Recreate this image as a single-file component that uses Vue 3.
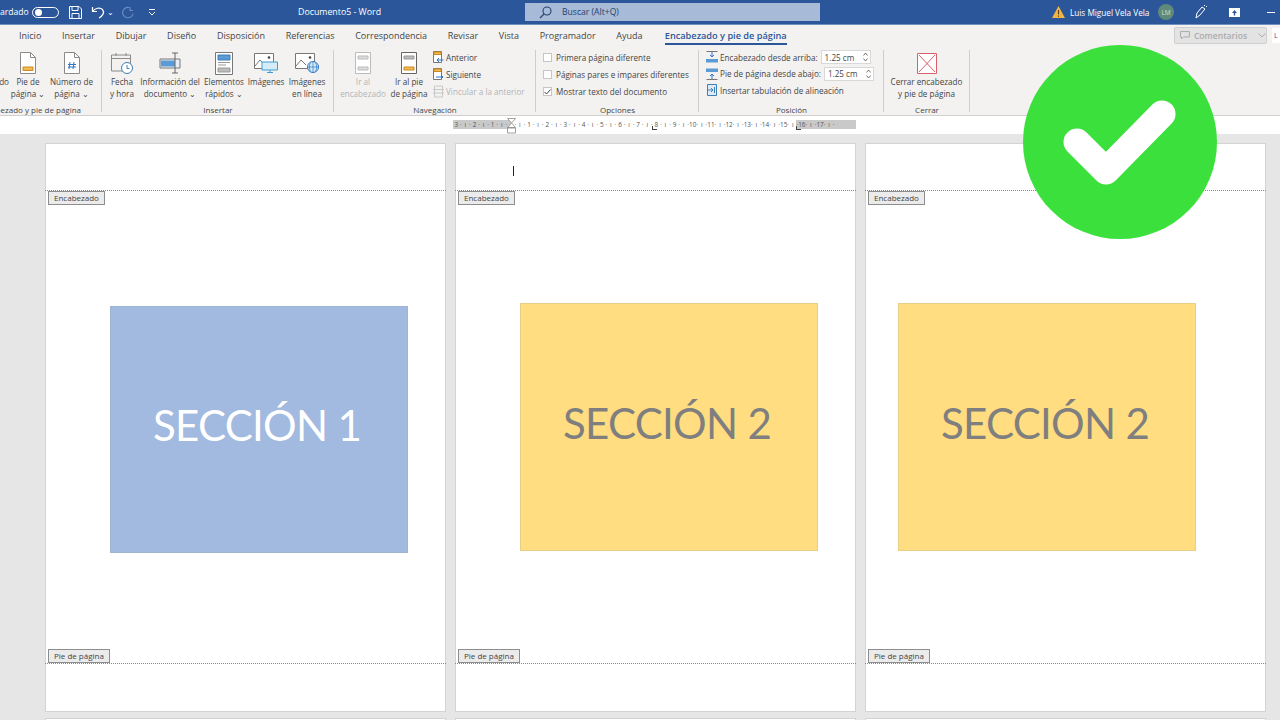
<script setup>
  // ruler ticks: four cells per centimetre, zero is the margin marker
  const ruler_cells = [];
  for (let i = -12; i <= 71; i++) {
    let label = "·";
    if (i % 4 == 0) label = i == 0 ? "" : String(Math.abs(i / 4));
    else if (Math.abs(i % 4) == 2) label = "ı";
    ruler_cells.push({ id: i, label: label });
  }

  const tabs = ["Inicio", "Insertar", "Dibujar", "Diseño", "Disposición", "Referencias", "Correspondencia", "Revisar", "Vista", "Programador", "Ayuda"];
  const options = [
    { text: "Primera página diferente", checked: false },
    { text: "Páginas pares e impares diferentes", checked: false },
    { text: "Mostrar texto del documento", checked: true }
  ];
</script>

<template>
  <div class="word">
    <!-- TITLE BAR -->
    <header class="title-bar">
      <span class="autosave">ardado</span>
      <span class="toggle"><i></i></span>
      <svg class="qat save" width="13" height="13" viewBox="0 0 13 13" fill="none" stroke="#fff"><path d="M.5.5h9.5l2.5 2.5v9.5H.5z M3 .5v4h6v-4 M3 12.5V7.5h7v5"/></svg>
      <svg class="qat undo" width="14" height="13" viewBox="0 0 14 13" fill="none" stroke="#fff" stroke-width="1.2"><path d="M1.5 1v4.5H6 M1.5 5.5C4 2 9 1 11.5 3.5 14 6.5 11.5 10 8 12"/></svg>
      <span class="qat caret">⌄</span>
      <svg class="qat redo" width="13" height="13" viewBox="0 0 13 13" fill="none" stroke="#6f8fc0" stroke-width="1.1"><path d="M7 1.5a5.2 5.2 0 1 0 4 6M8 1v3.5h3"/></svg>
      <svg class="qat more" width="8" height="8" viewBox="0 0 8 8" fill="none" stroke="#fff"><path d="M1 1.5h6M1 4l3 3 3-3"/></svg>
      <span class="doc-title">Documento5 - Word</span>
      <div class="search">
        <svg width="13" height="13" viewBox="0 0 13 13" fill="none" stroke="#24416f" stroke-width="1.1"><circle cx="8" cy="5" r="4"/><path d="M5 8l-4 4"/></svg>
        <span>Buscar (Alt+Q)</span>
      </div>
      <div class="account">
        <svg class="warn" width="13" height="12" viewBox="0 0 13 12"><path d="M6.5 0L13 12H0z" fill="#f2b544"/><path d="M6.5 4v4.5M6.5 9.5v1.3" stroke="#5a4310" stroke-width="1.1"/></svg>
        <span class="user">Luis Miguel Vela Vela</span>
        <span class="avatar">LM</span>
        <svg class="pen" width="12" height="14" viewBox="0 0 12 14" fill="none" stroke="#fff"><path d="M1 13l1-5 5-6 3 2-5 6z M9 1l1-1 M11 2l1-1"/></svg>
        <svg class="present" width="11" height="9" viewBox="0 0 11 9"><path d="M0 0h11v9H0z" fill="#fff"/><path d="M5.5 2L3 5h1.8v2.5h1.4V5H8z" fill="#2b579a"/></svg>
        <span class="minimize"></span>
      </div>
    </header>

    <!-- TABS -->
    <nav class="tabs">
      <span v-for="tab in tabs" :key="tab">{{ tab }}</span>
      <span class="tab-active">Encabezado y pie de página</span>
      <div class="tabs-right">
        <span class="comments">
          <svg width="10" height="9" viewBox="0 0 10 9" fill="none" stroke="#aaa"><path d="M.5.5h9v5.500h-6L1.5 8V6h-1z"/></svg>
          Comentarios
          <svg class="comments-caret" width="8" height="5" viewBox="0 0 8 5" fill="none" stroke="#aaa"><path d="M.5.5L4 4 7.5.5"/></svg>
        </span>
        <span class="share">L</span>
      </div>
    </nav>

    <!-- RIBBON -->
    <section class="ribbon">
      <div class="group group-hf">
        <div class="group-body">
          <div class="btn btn-cut"><div class="btn-icon"></div><span>do</span></div>
          <div class="btn btn-pie">
            <div class="btn-icon">
              <svg width="16" height="22" viewBox="0 0 16 22" fill="#fff" stroke="#8a8a8a"><path d="M.5.5h10l5 5v16H.5z"/><path d="M10.5.5v5h5" fill="none"/><path d="M3 15h10v3.5H3z" fill="#f5b955" stroke="#c98a1f"/></svg>
            </div>
            <span>Pie de</span><span>página ⌄</span>
          </div>
          <div class="btn btn-num">
            <div class="btn-icon">
              <svg width="16" height="22" viewBox="0 0 16 22" fill="#fff" stroke="#8a8a8a"><path d="M.5.5h10l5 5v16H.5z"/><path d="M10.5.5v5h5" fill="none"/><path d="M6 10l-1 7M10 10l-1 7M4 12.5h8M4 15h8" stroke="#2f76c5" fill="none"/></svg>
            </div>
            <span>Número de</span><span>página ⌄</span>
          </div>
        </div>
        <div class="group-label">Encabezado y pie de página</div>
      </div>

      <div class="group group-insert">
        <div class="group-body">
          <div class="btn btn-date">
            <div class="btn-icon">
              <svg width="22" height="22" viewBox="0 0 22 22" fill="none" stroke="#8a8a8a"><path d="M.5 3h19v16H.5zM.5 6.5h19M5 1v3M15 1v3"/><circle cx="16" cy="16" r="5.5" fill="#fff" stroke="#3f7fb5"/><path d="M16 13v3.5h2.5" stroke="#3f7fb5"/></svg>
            </div>
            <span>Fecha</span><span>y hora</span>
          </div>
          <div class="btn btn-info">
            <div class="btn-icon">
              <svg width="22" height="22" viewBox="0 0 22 22" fill="none"><path d="M1 7h20v9H1z" fill="#e9eef4" stroke="#777"/><path d="M2 8.5h14v6H2z" fill="#5b9bd5"/><path d="M13 1h6M13 21h6M16 1v20" stroke="#666"/></svg>
            </div>
            <span>Información del</span><span>documento ⌄</span>
          </div>
          <div class="btn btn-quick">
            <div class="btn-icon">
              <svg width="18" height="23" viewBox="0 0 18 23" fill="#fff" stroke="#777"><path d="M.5.5h17v22H.5z"/><path d="M3 3h12v5H3z" fill="#5b9bd5" stroke="#3f7fb5"/><path d="M3 10.5h12M3 13h8" stroke="#999" fill="none"/><path d="M3 16h12v4H3z" fill="#bbb" stroke="#999"/></svg>
            </div>
            <span>Elementos</span><span>rápidos ⌄</span>
          </div>
          <div class="btn btn-pic">
            <div class="btn-icon">
              <svg width="24" height="20" viewBox="0 0 24 20" fill="none" stroke="#777"><path d="M.5.5h19v15H.5z" fill="#fff"/><path d="M1 13l5-6 5 5" stroke="#777"/><circle cx="15" cy="4.5" r="1.3" fill="#444" stroke="none"/><path d="M8 9h15.5v8H8z" fill="#d6ecf8" stroke="#3f9bd1"/><path d="M16 17v2.5M13 19.5h6" stroke="#3f9bd1"/></svg>
            </div>
            <span>Imágenes</span>
          </div>
          <div class="btn btn-web">
            <div class="btn-icon">
              <svg width="24" height="20" viewBox="0 0 24 20" fill="none" stroke="#777"><path d="M.5.5h19v15H.5z" fill="#fff"/><path d="M1 13l5-6 5 5"/><circle cx="15" cy="4.5" r="1.3" fill="#444" stroke="none"/><circle cx="18" cy="14" r="5.5" fill="#d6ecf8" stroke="#2f76c5"/><path d="M12.5 14h11M18 8.5v11M15.5 9.5c-1.5 3-1.5 6 0 9M20.5 9.5c1.5 3 1.5 6 0 9" stroke="#2f76c5" stroke-width=".7"/></svg>
            </div>
            <span>Imágenes</span><span>en línea</span>
          </div>
        </div>
        <div class="group-label">Insertar</div>
      </div>

      <div class="group group-nav">
        <div class="group-body">
          <div class="btn btn-prev disabled">
            <div class="btn-icon">
              <svg width="16" height="22" viewBox="0 0 16 22" fill="#fff" stroke="#bbb"><path d="M.5.5h15v21H.5z"/><path d="M3 4h10v3H3zM3 15h10v3H3z" fill="#ddd"/></svg>
            </div>
            <span>Ir al</span><span>encabezado</span>
          </div>
          <div class="btn btn-next">
            <div class="btn-icon">
              <svg width="16" height="22" viewBox="0 0 16 22" fill="#fff" stroke="#666"><path d="M.5.5h15v21H.5z"/><path d="M3 4h10v3H3z" fill="#bbb" stroke="#999"/><path d="M3 15h10v3H3z" fill="#f5b955" stroke="#c98a1f"/></svg>
            </div>
            <span>Ir al pie</span><span>de página</span>
          </div>
          <ul class="side-list">
            <li>
              <svg width="11" height="13" viewBox="0 0 11 13" fill="#fff" stroke="#777"><path d="M.5.5h8v11H.5z"/><path d="M1 1h7v2.5H1z" fill="#f5b955" stroke="#c98a1f"/><path d="M10.5 9H4M6 7L4 9l2 2" stroke="#2f76c5" fill="none"/></svg>
              Anterior
            </li>
            <li>
              <svg width="11" height="13" viewBox="0 0 11 13" fill="#fff" stroke="#777"><path d="M.5.5h8v11H.5z"/><path d="M1 1h7v2.5H1z" fill="#f5b955" stroke="#c98a1f"/><path d="M3 9h7M8 7l2 2-2 2" stroke="#2f76c5" fill="none"/></svg>
              Siguiente
            </li>
            <li class="disabled">
              <svg width="11" height="13" viewBox="0 0 11 13" fill="none" stroke="#c8c8c8"><path d="M1.5 1h8v11h-8zM0 4.5h11M0 8h11"/></svg>
              Vincular a la anterior
            </li>
          </ul>
        </div>
        <div class="group-label">Navegación</div>
      </div>

      <div class="group group-opt">
        <div class="group-body">
          <ul class="opt-list">
            <li v-for="opt in options" :key="opt.text">
              <span class="check"><svg v-if="opt.checked" width="7" height="6" viewBox="0 0 7 6" fill="none" stroke="#444"><path d="M.5 3l2 2L6.5.5"/></svg></span>
              {{ opt.text }}
            </li>
          </ul>
        </div>
        <div class="group-label">Opciones</div>
      </div>

      <div class="group group-pos">
        <div class="group-body">
          <ul class="pos-list">
            <li>
              <svg width="12" height="12" viewBox="0 0 12 12" fill="none"><path d="M.5.5h11" stroke="#777"/><path d="M6 1v5M4 4l2 2 2-2" stroke="#2f76c5"/><path d="M0 8h12v3.5H0z" fill="#5b9bd5"/></svg>
              Encabezado desde arriba:
              <span class="spin">1.25 cm<svg width="5" height="10" viewBox="0 0 5 10" fill="none" stroke="#555" stroke-width=".8"><path d="M.5 3.5L2.5 1l2 2.5M.5 6.5L2.5 9l2-2.5"/></svg></span>
            </li>
            <li>
              <svg width="12" height="12" viewBox="0 0 12 12" fill="none"><path d="M0 .5h12V4H0z" fill="#5b9bd5"/><path d="M.5 11.5h11" stroke="#777"/><path d="M6 11V6M4 8l2-2 2 2" stroke="#2f76c5"/></svg>
              Pie de página desde abajo:
              <span class="spin">1.25 cm<svg width="5" height="10" viewBox="0 0 5 10" fill="none" stroke="#555" stroke-width=".8"><path d="M.5 3.5L2.5 1l2 2.5M.5 6.5L2.5 9l2-2.5"/></svg></span>
            </li>
            <li>
              <svg width="12" height="12" viewBox="-1 0 12 12" fill="#dcebf7" stroke="#3f7fb5"><path d="M.5.5h9v11h-9z"/><path d="M1 6h5M4 4l2 2-2 2M7.5 3v6" fill="none"/></svg>
              Insertar tabulación de alineación
            </li>
          </ul>
        </div>
        <div class="group-label">Posición</div>
      </div>

      <div class="group group-close">
        <div class="group-body">
          <div class="btn btn-close">
            <div class="btn-icon">
              <svg width="20" height="21" viewBox="0 0 20 21" fill="#fff" stroke="#d9606a"><path d="M.5.5h19v20H.5zM2 2l16 17M18 2L2 19"/></svg>
            </div>
            <span>Cerrar encabezado</span><span>y pie de página</span>
          </div>
        </div>
        <div class="group-label">Cerrar</div>
      </div>
    </section>

    <!-- RULER -->
    <div class="ruler-row">
      <div class="ruler">
        <span class="ruler-gray left"></span>
        <span class="ruler-gray right"></span>
        <span v-for="c in ruler_cells" :key="c.id" class="ruler-cell">{{ c.label }}</span>
        <svg class="indent" width="9" height="16" viewBox="0 0 9 16" fill="#fff" stroke="#888" stroke-width=".8"><path d="M.5.5h8L4.5 5zM4.5 5l4 4.5h-8zM.5 10h8v5h-8z"/></svg>
        <span class="tab-stop stop-a"></span>
        <span class="tab-stop stop-b"></span>
      </div>
    </div>

    <!-- DOCUMENT -->
    <main class="doc">
      <div class="pages">
        <article class="page">
          <div class="hf-zone"></div>
          <span class="hf-tag">Encabezado</span>
          <div class="page-body body-one"><div class="block blue">SECCIÓN 1</div></div>
          <span class="hf-tag">Pie de página</span>
          <div class="hf-zone foot"></div>
        </article>
        <article class="page">
          <div class="hf-zone"><span class="cursor"></span></div>
          <span class="hf-tag">Encabezado</span>
          <div class="page-body body-two"><div class="block yellow">SECCIÓN 2</div></div>
          <span class="hf-tag">Pie de página</span>
          <div class="hf-zone foot"></div>
        </article>
        <article class="page">
          <div class="hf-zone"></div>
          <span class="hf-tag">Encabezado</span>
          <div class="page-body body-three"><div class="block yellow">SECCIÓN 2</div></div>
          <span class="hf-tag">Pie de página</span>
          <div class="hf-zone foot"></div>
        </article>
      </div>
      <div class="pages">
        <div class="page-next"></div>
        <div class="page-next"></div>
        <div class="page-next"></div>
      </div>
    </main>

    <!-- GREEN BADGE OVER EVERYTHING -->
    <svg class="badge" width="194" height="194" viewBox="0 0 194 194">
      <circle cx="97" cy="97" r="97" fill="#3ce03c"/>
      <path d="M54 97l29 29 56-57" fill="none" stroke="#fff" stroke-width="27" stroke-linecap="round" stroke-linejoin="round"/>
    </svg>
  </div>
</template>

<style scoped>
  * {
    margin: 0;
    padding: 0;
    box-sizing: border-box;
  }

  .word {
    position: relative;
    width: 1280px;
    height: 720px;
    overflow: hidden;
    font-family: "Open Sans", "Noto Sans", sans-serif;
    font-size: 8.15px;
    color: #454545;
    background: #e6e6e6;
  }

  /* title bar */
  .title-bar {
    display: flex;
    align-items: center;
    height: 25px;
    background: #2b579a;
    color: #fff;
    border-bottom: 1px solid #6e8fbf;
  }

  .autosave {
    width: 32px;
    font-size: 8.6px;
  }

  .toggle {
    display: flex;
    align-items: center;
    width: 27px;
    height: 11px;
    border: 1px solid #fff;
    border-radius: 6px;
    padding-left: 2px;
  }

  .toggle i {
    width: 7px;
    height: 7px;
    border-radius: 50%;
    background: #fff;
  }

  .save { margin-left: 10px; }
  .undo { margin-left: 9px; }
  .caret { margin-left: 2px; width: 11px; font-size: 8px; line-height: 8px; }
  .redo { margin-left: 4px; }
  .more { margin-left: 13px; }

  .doc-title {
    margin-left: 142px;
    width: 227px;
    font-size: 8.8px;
  }

  .search {
    display: flex;
    align-items: center;
    gap: 10px;
    width: 295px;
    height: 18px;
    padding-left: 14px;
    background: #a7bbd8;
    color: #24416f;
    font-size: 8.6px;
  }

  .account {
    display: flex;
    align-items: center;
    margin-left: auto;
    width: 228px;
    font-size: 8.2px;
  }

  .user { margin-left: 5px; width: 88px; white-space: nowrap; }

  .avatar {
    display: flex;
    align-items: center;
    justify-content: center;
    width: 16px;
    height: 16px;
    border-radius: 50%;
    background: #5f8a7a;
    color: #cfe0d8;
    font-size: 6.5px;
  }

  .pen { margin-left: 21px; }
  .present { margin-left: 22px; }

  .minimize {
    margin-left: 27px;
    width: 8px;
    height: 1px;
    background: #fff;
  }

  /* tabs */
  .tabs {
    display: flex;
    align-items: center;
    gap: 20.7px;
    height: 21px;
    padding-left: 19px;
    background: #f3f2f1;
    font-size: 9px;
    white-space: nowrap;
  }

  .tab-active {
    color: #2b579a;
    font-weight: 600;
    font-size: 9.2px;
    border-bottom: 2px solid #2b579a;
    line-height: 14px;
    margin: 3px 0 0 1.5px;
  }

  .tabs-right {
    display: flex;
    align-items: center;
    gap: 5px;
    margin-left: auto;
    margin-right: -8px;
  }

  .comments {
    display: flex;
    align-items: center;
    gap: 4px;
    width: 93px;
    height: 17px;
    padding-left: 5px;
    background: #e3e3e3;
    border: 1px solid #cfcfcf;
    border-radius: 2px;
    color: #ababab;
    font-weight: 600;
    font-size: 8.6px;
  }

  .comments-caret { margin-left: 7px; }

  .share {
    width: 16px;
    height: 15px;
    padding-left: 2px;
    background: #fff;
    color: #2b579a;
    font-size: 7px;
    line-height: 15px;
  }

  /* ribbon */
  .ribbon {
    display: flex;
    height: 70px;
    background: #f3f2f1;
    border-bottom: 1px solid #d2d0ce;
    box-shadow: 0 1px 2px #e2e2e2;
  }

  .group {
    display: flex;
    flex-direction: column;
    flex: none;
    position: relative;
  }

  .group::after {
    content: "";
    position: absolute;
    right: 0;
    top: 4px;
    bottom: 3px;
    width: 1px;
    background: #d0cecc;
  }

  .group-hf { width: 153px; margin-left: -51px; padding-left: 26px; }
  .group-insert { width: 232px; }
  .group-nav { width: 202px; }
  .group-opt { width: 163px; }
  .group-pos { width: 185px; }
  .group-close { width: 86px; }

  .group-body {
    display: flex;
    flex: 1;
  }

  .group-label {
    height: 13px;
    text-align: center;
    font-size: 8px;
    line-height: 15px;
    white-space: nowrap;
  }

  .group-hf .group-label { margin-left: -18px; }

  .btn {
    display: flex;
    flex-direction: column;
    align-items: center;
    flex: none;
    padding-top: 5px;
    line-height: 11.5px;
    white-space: nowrap;
  }

  .btn-icon {
    display: flex;
    align-items: center;
    justify-content: center;
    height: 24px;
    margin-bottom: 1px;
  }

  .disabled { color: #b5b5b5; }

  .btn-cut { width: 34px; align-items: flex-end; }
  .btn-pie { width: 34px; margin-left: 2px; }
  .btn-num { width: 53px; }
  .btn-date { width: 40px; }
  .btn-info { width: 56px; }
  .btn-quick { width: 52px; }
  .btn-pic { width: 32px; }
  .btn-web { width: 50px; }
  .btn-prev { width: 58px; }
  .btn-next { width: 34px; }
  .btn-close { width: 85px; }

  .side-list,
  .opt-list,
  .pos-list {
    list-style: none;
    display: flex;
    flex-direction: column;
    white-space: nowrap;
  }

  .side-list { margin-left: 7px; padding-top: 5px; gap: 4px; }
  .side-list li { display: flex; align-items: center; gap: 2px; height: 13px; }

  .opt-list { margin-left: 7px; padding-top: 5px; gap: 4px; }
  .opt-list li { display: flex; align-items: center; gap: 4px; height: 13px; }

  .check {
    display: flex;
    align-items: center;
    justify-content: center;
    width: 9px;
    height: 9px;
    background: #fff;
    border: 1px solid #c6c6c6;
  }

  .pos-list { margin-left: 7px; padding-top: 4px; gap: 2.5px; }
  .pos-list li { display: flex; align-items: center; gap: 2px; height: 14px; }

  .spin {
    display: flex;
    align-items: center;
    justify-content: space-between;
    width: 50px;
    height: 14px;
    margin-left: 1px;
    padding: 0 2px 0 3px;
    background: #fff;
    border: 1px solid #d8d8d8;
  }

  /* ruler */
  .ruler-row {
    height: 18px;
    padding: 4px 0 0 453px;
    background: #fff;
  }

  .ruler {
    position: relative;
    display: flex;
    width: 403px;
    height: 9px;
    padding-left: 1px;
    overflow: visible;
    color: #555;
    font-size: 6.4px;
    line-height: 9px;
  }

  .ruler-gray {
    position: absolute;
    top: 0;
    height: 9px;
    background: #c9c9c9;
  }

  .ruler-gray.left { left: 0; width: 58px; }
  .ruler-gray.right { left: 343px; width: 60px; }

  .ruler-cell {
    position: relative;
    flex: none;
    width: 4.55px;
    text-align: center;
    white-space: nowrap;
    display: flex;
    justify-content: center;
  }

  .indent {
    position: absolute;
    left: 54px;
    top: -2px;
  }

  .tab-stop {
    position: absolute;
    top: 6px;
    width: 5px;
    height: 4px;
    border-left: 1px solid #444;
    border-bottom: 1px solid #444;
  }

  .stop-a { left: 199px; }
  .stop-b { left: 343px; }

  /* document */
  .doc {
    display: flex;
    flex-direction: column;
    gap: 6px;
    height: 586px;
    padding: 9px 0 0 45px;
    overflow: hidden;
  }

  .pages {
    display: flex;
    gap: 9px;
  }

  .page {
    display: flex;
    flex-direction: column;
    flex: none;
    width: 401px;
    height: 569px;
    background: #fff;
    border: 1px solid #d3d3d3;
  }

  .page-next {
    flex: none;
    width: 401px;
    height: 20px;
    background: #fff;
    border: 1px solid #d3d3d3;
  }

  .hf-zone {
    position: relative;
    flex: none;
    height: 47px;
    margin: 0 -1px;
    border-bottom: 1px dotted #888;
  }

  .hf-zone.foot {
    height: 48px;
    border-bottom: none;
    border-top: 1px dotted #888;
  }

  .cursor {
    position: absolute;
    left: 58px;
    top: 22px;
    width: 1px;
    height: 10px;
    background: #222;
  }

  .hf-tag {
    align-self: flex-start;
    margin-left: 2px;
    padding: 0 5px;
    height: 14px;
    line-height: 11px;
    font-size: 8px;
    color: #444;
    background: #ebebeb;
    border: 1px solid #8d8d8d;
  }

  .page-body {
    flex: 1;
  }

  .body-one { padding: 101px 0 0 64px; }
  .body-two { padding: 98px 0 0 64px; }
  .body-three { padding: 98px 0 0 32px; }

  .block {
    display: flex;
    align-items: center;
    justify-content: center;
    width: 298px;
    height: 248px;
    padding: 0 4px 9px 0;
    font-family: Lato, "Open Sans", sans-serif;
    font-size: 42px;
    letter-spacing: -0.7px;
  }

  .blue {
    height: 247px;
    background: #a2b9e0;
    color: #fff;
    border: 1px solid #a0b4d4;
  }

  .yellow {
    background: #ffdd80;
    color: #7f7f7f;
    border: 1px solid #e8cf88;
  }

  /* badge */
  .badge {
    position: absolute;
    left: 1023px;
    top: 45px;
  }
</style>

<style>
  html, body {
    margin: 0;
    background: #e6e6e6;
  }
</style>
